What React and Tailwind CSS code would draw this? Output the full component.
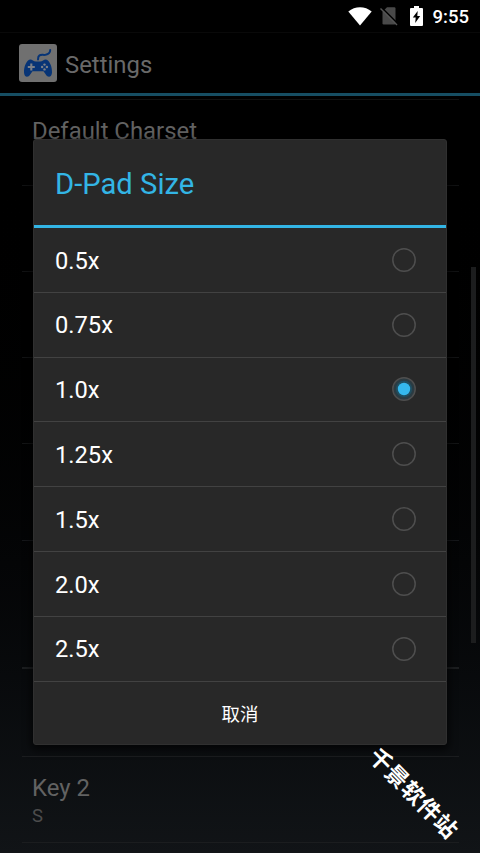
import React from 'react';

const options = ['0.5x', '0.75x', '1.0x', '1.25x', '1.5x', '2.0x', '2.5x'];

// Rows hidden behind the dialog only keep their height and divider
const prefRows = [
  { title: 'Default Charset', height: 'h-[86px]', line: 'border-b border-[#111213]' },
  { height: 'h-[86px]', line: 'border-b border-[#111213]' },
  { height: 'h-[86px]', line: 'border-b border-[#121314]' },
  { height: 'h-[86px]', line: 'border-b border-[#131415]' },
  { height: 'h-[97px]', line: 'border-b border-[#15171a]' },
  { height: 'h-[128px]', line: 'border-b-2 border-[#1c1e20]' },
  { height: 'h-[88px]', line: 'border-b border-[#1b1d1f]' },
  { title: 'Key 2', value: 'S', height: 'h-[86px]', line: 'border-b border-[#1b1d1f]' },
];

const StatusBar = () => (
  <div className="flex h-8 shrink-0 items-center justify-end bg-black pr-[11px] text-white">
    <svg className="mr-[8px] h-5 w-6" viewBox="0 0 24 20" fill="currentColor">
      <path d="M0.3 5.5C7-0.3 17-0.3 23.7 5.5L12 19.6Z" />
    </svg>
    <svg className="mr-[12px] h-5 w-[18px]" viewBox="0 0 18 20">
      <path d="M7 1.2h7.3q1.2 0 1.2 1.2v14.8q0 1.2-1.2 1.2H3.7q-1.2 0-1.2-1.2V5.7z" fill="#494949" />
      <path d="M1.5 1.5L18 18" stroke="#000" strokeWidth="1.6" />
      <path d="M0.5 2.5L17 19" stroke="#555" strokeWidth="1.4" />
    </svg>
    <svg className="mr-[10px] h-5 w-[13px]" viewBox="0 0 13 20">
      <path d="M4 0h5v2h3q1 0 1 1v16q0 1-1 1H1q-1 0-1-1V3q0-1 1-1h3z" fill="currentColor" />
      <path d="M7.7 5L2.8 11.4h2.9L5.2 17l5-7H7.3z" fill="#000" />
    </svg>
    <span className="pt-px text-[18.5px] leading-8 font-medium">9:55</span>
  </div>
);

const GamepadIcon = () => (
  <svg className="h-[38px] w-[38px]" viewBox="0 0 38 38">
    <rect width="38" height="38" rx="3" fill="#707070" />
    <path d="M19 15.5C19 9.2 23 11.3 26.5 10.8C30 10.2 31.2 9 31.2 6" fill="none" stroke="#073476" strokeWidth="2" strokeLinecap="round" />
    <path d="M11 15.5C13 15.2 14.4 17.5 17 17.5h4C23.6 17.5 25 15.2 27 15.5C30.5 16 33.3 23 33 28.5C32.8 33.5 28.8 34 26.8 30.5L24.5 27.3H13.5L11.2 30.5C9.2 34 5.2 33.5 5 28.5C4.7 23 7.5 16 11 15.5Z" fill="#073476" />
    <path d="M12.3 19.5v7M8.8 23h7" stroke="#7b8088" strokeWidth="2.1" />
    <g fill="#7b8088">
      <circle cx="25.5" cy="20.6" r="1.2" />
      <circle cx="25.5" cy="25.4" r="1.2" />
      <circle cx="23.1" cy="23" r="1.2" />
      <circle cx="27.9" cy="23" r="1.2" />
    </g>
  </svg>
);

const Radio = ({ checked }) => (
  <svg className="h-6 w-6" viewBox="0 0 24 24">
    {checked && (
      <>
        <circle cx="12" cy="12" r="11" fill="#2b3b42" />
        <circle cx="12" cy="12" r="8.2" fill="#1f4e60" />
      </>
    )}
    <circle cx="12" cy="12" r="11.2" fill="none" stroke="#4e4e4e" strokeWidth="1.5" />
    {checked && <circle cx="12" cy="12" r="6.2" fill="#35b8ed" />}
  </svg>
);

const SizeDialog = ({ selected }) => (
  <div className="absolute top-[139px] left-[33px] flex h-[606px] w-[414px] flex-col rounded-[3px] border border-[#303030] bg-[#282828] shadow-[0_3px_8px_2px_rgba(0,0,0,0.65)]">
    <h2 className="h-[85px] shrink-0 pl-[21px] text-[29.2px] leading-[88px] text-[#33b5e5]">D-Pad Size</h2>
    <div className="h-[3px] shrink-0 bg-[#33b5e5]" />
    <ul>
      {options.map((label) => (
        <li key={label} className="flex h-[64.8px] items-center justify-between border-b border-[#424242] pr-[30px] pl-[21px] text-[23.7px] text-white">
          <span className="pt-[3px]">{label}</span>
          <Radio checked={label === selected} />
        </li>
      ))}
    </ul>
    <button className="flex-1 pt-1.5 font-['Roboto','Noto_Sans_CJK_SC',sans-serif] text-[18.5px] text-white">取消</button>
  </div>
);

const App = () => (
  <div className="relative flex h-[853px] w-[480px] flex-col overflow-hidden bg-linear-to-b from-black from-15% to-[#111417] font-['Roboto',sans-serif]">
    <StatusBar />
    <header className="flex h-[61px] shrink-0 items-center gap-2 border-t border-[#090909] pl-[19px]">
      <GamepadIcon />
      <h1 className="pt-1.5 text-[23.9px] text-[#696969]">Settings</h1>
    </header>
    <div className="h-[3px] shrink-0 bg-[#164e63]" />

    <div className="flex">
      <div className="mt-[3px] ml-[22px] w-[437px] border-t border-[#111]">
        {prefRows.map((row, i) => (
          <div key={i} className={`flex flex-col pt-[15px] pl-[10px] ${row.height} ${row.line}`}>
            {row.title && <p className="text-[23.9px] leading-8 text-[#626262]">{row.title}</p>}
            {row.value && <p className="text-[18.5px] leading-6 text-[#4c4c4c]">{row.value}</p>}
          </div>
        ))}
      </div>
      <div className="mt-[171px] ml-3 h-[376px] w-[5px] bg-[#1c1d1e]" />
    </div>

    <SizeDialog selected="1.0x" />

    {/* diagonal site stamp */}
    <span className="absolute top-[778px] left-[357px] rotate-[45.5deg] font-['Noto_Sans_CJK_SC',sans-serif] text-[22.5px] leading-7 font-bold tracking-[0.6px] whitespace-nowrap text-white">
      千景软件站
    </span>
  </div>
);

export default App;
